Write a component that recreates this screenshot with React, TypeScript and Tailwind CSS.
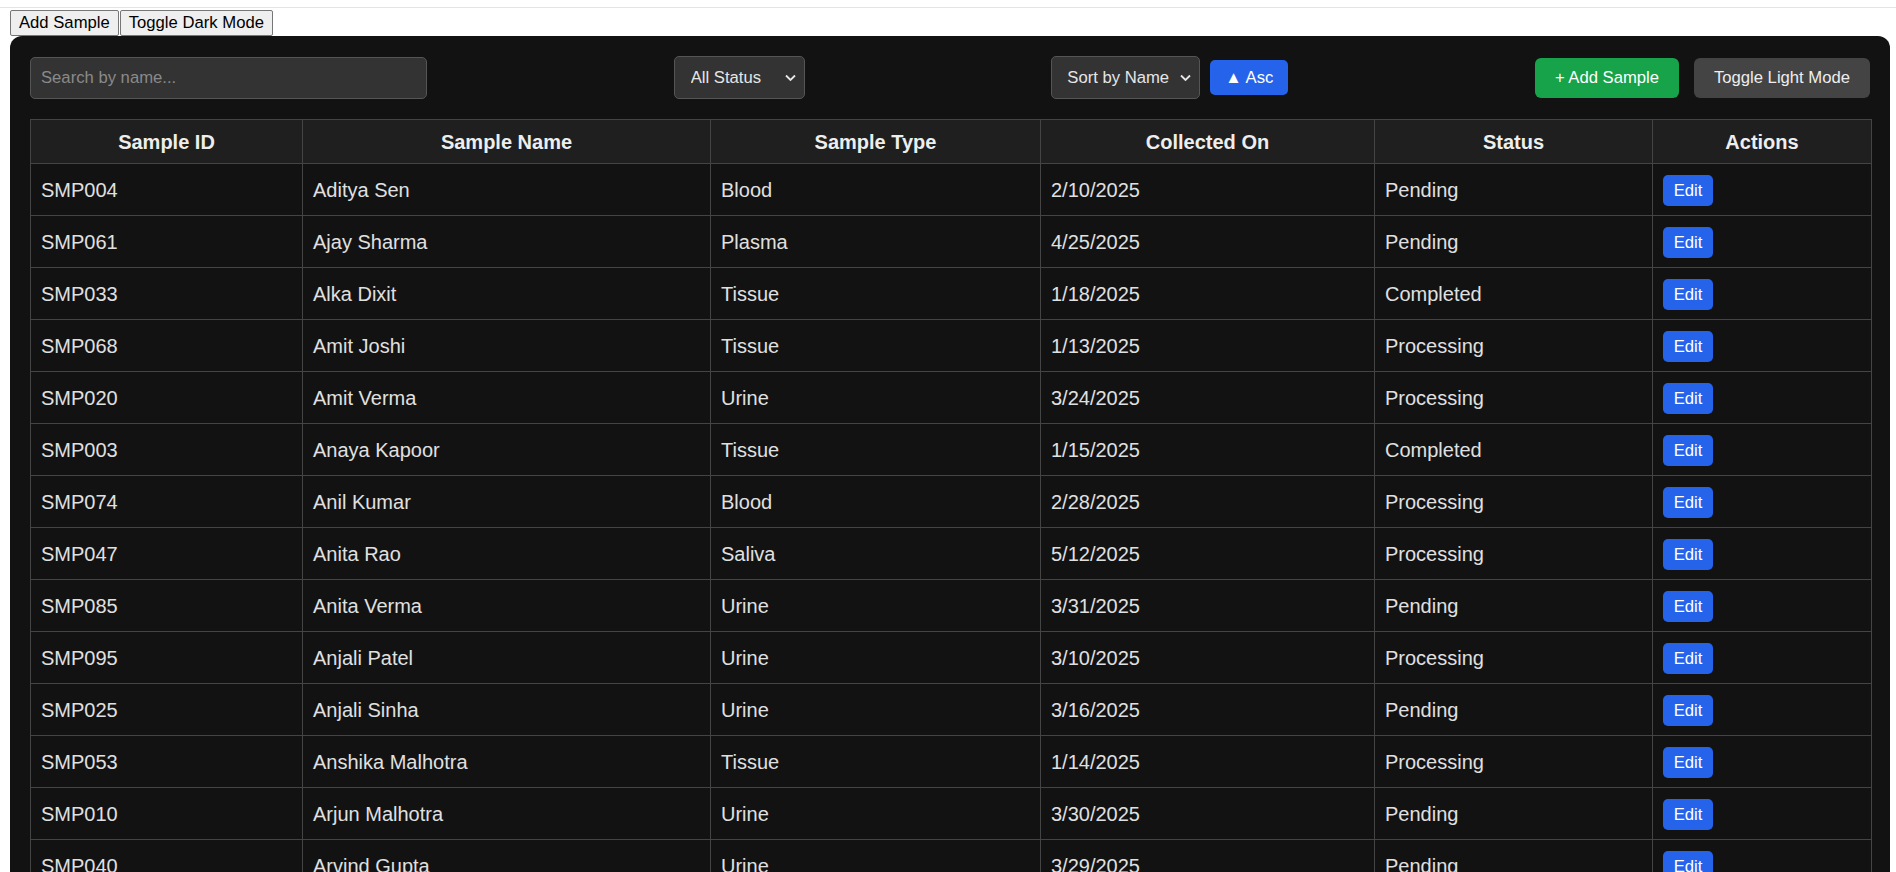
import React from "react";

type Row = [string, string, string, string, string];

const rows: Row[] = [
  ["SMP004", "Aditya Sen", "Blood", "2/10/2025", "Pending"],
  ["SMP061", "Ajay Sharma", "Plasma", "4/25/2025", "Pending"],
  ["SMP033", "Alka Dixit", "Tissue", "1/18/2025", "Completed"],
  ["SMP068", "Amit Joshi", "Tissue", "1/13/2025", "Processing"],
  ["SMP020", "Amit Verma", "Urine", "3/24/2025", "Processing"],
  ["SMP003", "Anaya Kapoor", "Tissue", "1/15/2025", "Completed"],
  ["SMP074", "Anil Kumar", "Blood", "2/28/2025", "Processing"],
  ["SMP047", "Anita Rao", "Saliva", "5/12/2025", "Processing"],
  ["SMP085", "Anita Verma", "Urine", "3/31/2025", "Pending"],
  ["SMP095", "Anjali Patel", "Urine", "3/10/2025", "Processing"],
  ["SMP025", "Anjali Sinha", "Urine", "3/16/2025", "Pending"],
  ["SMP053", "Anshika Malhotra", "Tissue", "1/14/2025", "Processing"],
  ["SMP010", "Arjun Malhotra", "Urine", "3/30/2025", "Pending"],
  ["SMP040", "Arvind Gupta", "Urine", "3/29/2025", "Pending"],
  ["SMP012", "Arvind Nair", "Blood", "2/14/2025", "Completed"],
  ["SMP077", "Ayesha Khan", "Plasma", "4/02/2025", "Pending"],
];

function Chevron() {
  return (
    <svg
      className="pointer-events-none absolute right-[9px] top-1/2 -translate-y-1/2"
      width="11"
      height="7"
      viewBox="0 0 11 7"
      fill="none"
    >
      <path d="M1 1l4.5 4.5L10 1" stroke="#e6e6e6" strokeWidth="1.8" />
    </svg>
  );
}

export default function App() {
  const font = { fontFamily: '"Liberation Sans", Arial, sans-serif' };
  return (
    <div className="min-h-screen bg-white" style={font}>
      <div className="h-[7px]" />
      <div className="h-[1px] bg-[#e3e3e3]" />
      <div className="h-[2px]" />
      <div className="flex h-[26px] pl-[10px]">
        <button className="h-[26px] rounded-[2px] border border-[#767676] bg-[#efefef] px-[8px] text-[16.67px] leading-[22px] text-black">
          Add Sample
        </button>
        <button className="ml-[1px] h-[26px] rounded-[2px] border border-[#767676] bg-[#efefef] px-[8px] text-[16.67px] leading-[22px] text-black">
          Toggle Dark Mode
        </button>
      </div>
      <div className="ml-[10px] w-[1880px] rounded-[12px] bg-[#121212] p-[20px] text-[#e6e6e6]">
        <div className="flex h-[43px] items-center justify-between">
          <input
            placeholder="Search by name..."
            className="h-[42px] w-[397px] rounded-[5px] border border-[#555] bg-[#333] px-[10px] text-[16.67px] text-[#e6e6e6] outline-none placeholder:text-[#8a8a8a]"
          />
          <div className="relative">
            <select className="h-[43px] w-[131px] appearance-none rounded-[5px] border border-[#555] bg-[#333] pl-[16px] text-[16.67px] text-[#e6e6e6] outline-none">
              <option>All Status</option>
            </select>
            <Chevron />
          </div>
          <div className="flex items-center gap-[10px]">
            <div className="relative">
              <select className="h-[43px] w-[149px] appearance-none rounded-[5px] border border-[#555] bg-[#333] pl-[15px] text-[16.67px] text-[#e6e6e6] outline-none">
                <option>Sort by Name</option>
              </select>
              <Chevron />
            </div>
            <button className="h-[35px] w-[78px] rounded-[5px] bg-[#2563eb] text-[16.67px] text-white">
              ▲ Asc
            </button>
          </div>
          <div className="flex items-center gap-[15px]">
            <button className="h-[40px] w-[144px] rounded-[6px] bg-[#16a34a] text-[16.67px] text-white">
              + Add Sample
            </button>
            <button className="h-[40px] w-[176px] rounded-[6px] bg-[#444] text-[16.67px] text-[#eeeeee]">
              Toggle Light Mode
            </button>
          </div>
        </div>
        <table className="mt-[20px] w-[1841px] table-fixed border-collapse text-[20px]">
          <colgroup>
            <col className="w-[272px]" />
            <col className="w-[408px]" />
            <col className="w-[330px]" />
            <col className="w-[334px]" />
            <col className="w-[278px]" />
            <col className="w-[219px]" />
          </colgroup>
          <thead>
            <tr className="h-[44px] bg-[#1f1f1f]">
              {["Sample ID", "Sample Name", "Sample Type", "Collected On", "Status", "Actions"].map((h) => (
                <th key={h} className="border border-[#444] px-[10px] py-0 text-center font-bold text-[#eeeeee]">
                  {h}
                </th>
              ))}
            </tr>
          </thead>
          <tbody>
            {rows.map((r) => (
              <tr key={r[0]} className="h-[52px]">
                {r.map((c, i) => (
                  <td key={i} className="border border-[#444] px-[10px] py-0 text-left text-[#e0e0e0]">
                    {c}
                  </td>
                ))}
                <td className="border border-[#444] px-[10px] py-0 text-left">
                  <button className="h-[31px] w-[50px] rounded-[5px] bg-[#2563eb] text-[16.67px] text-white">
                    Edit
                  </button>
                </td>
              </tr>
            ))}
          </tbody>
        </table>
      </div>
    </div>
  );
}
